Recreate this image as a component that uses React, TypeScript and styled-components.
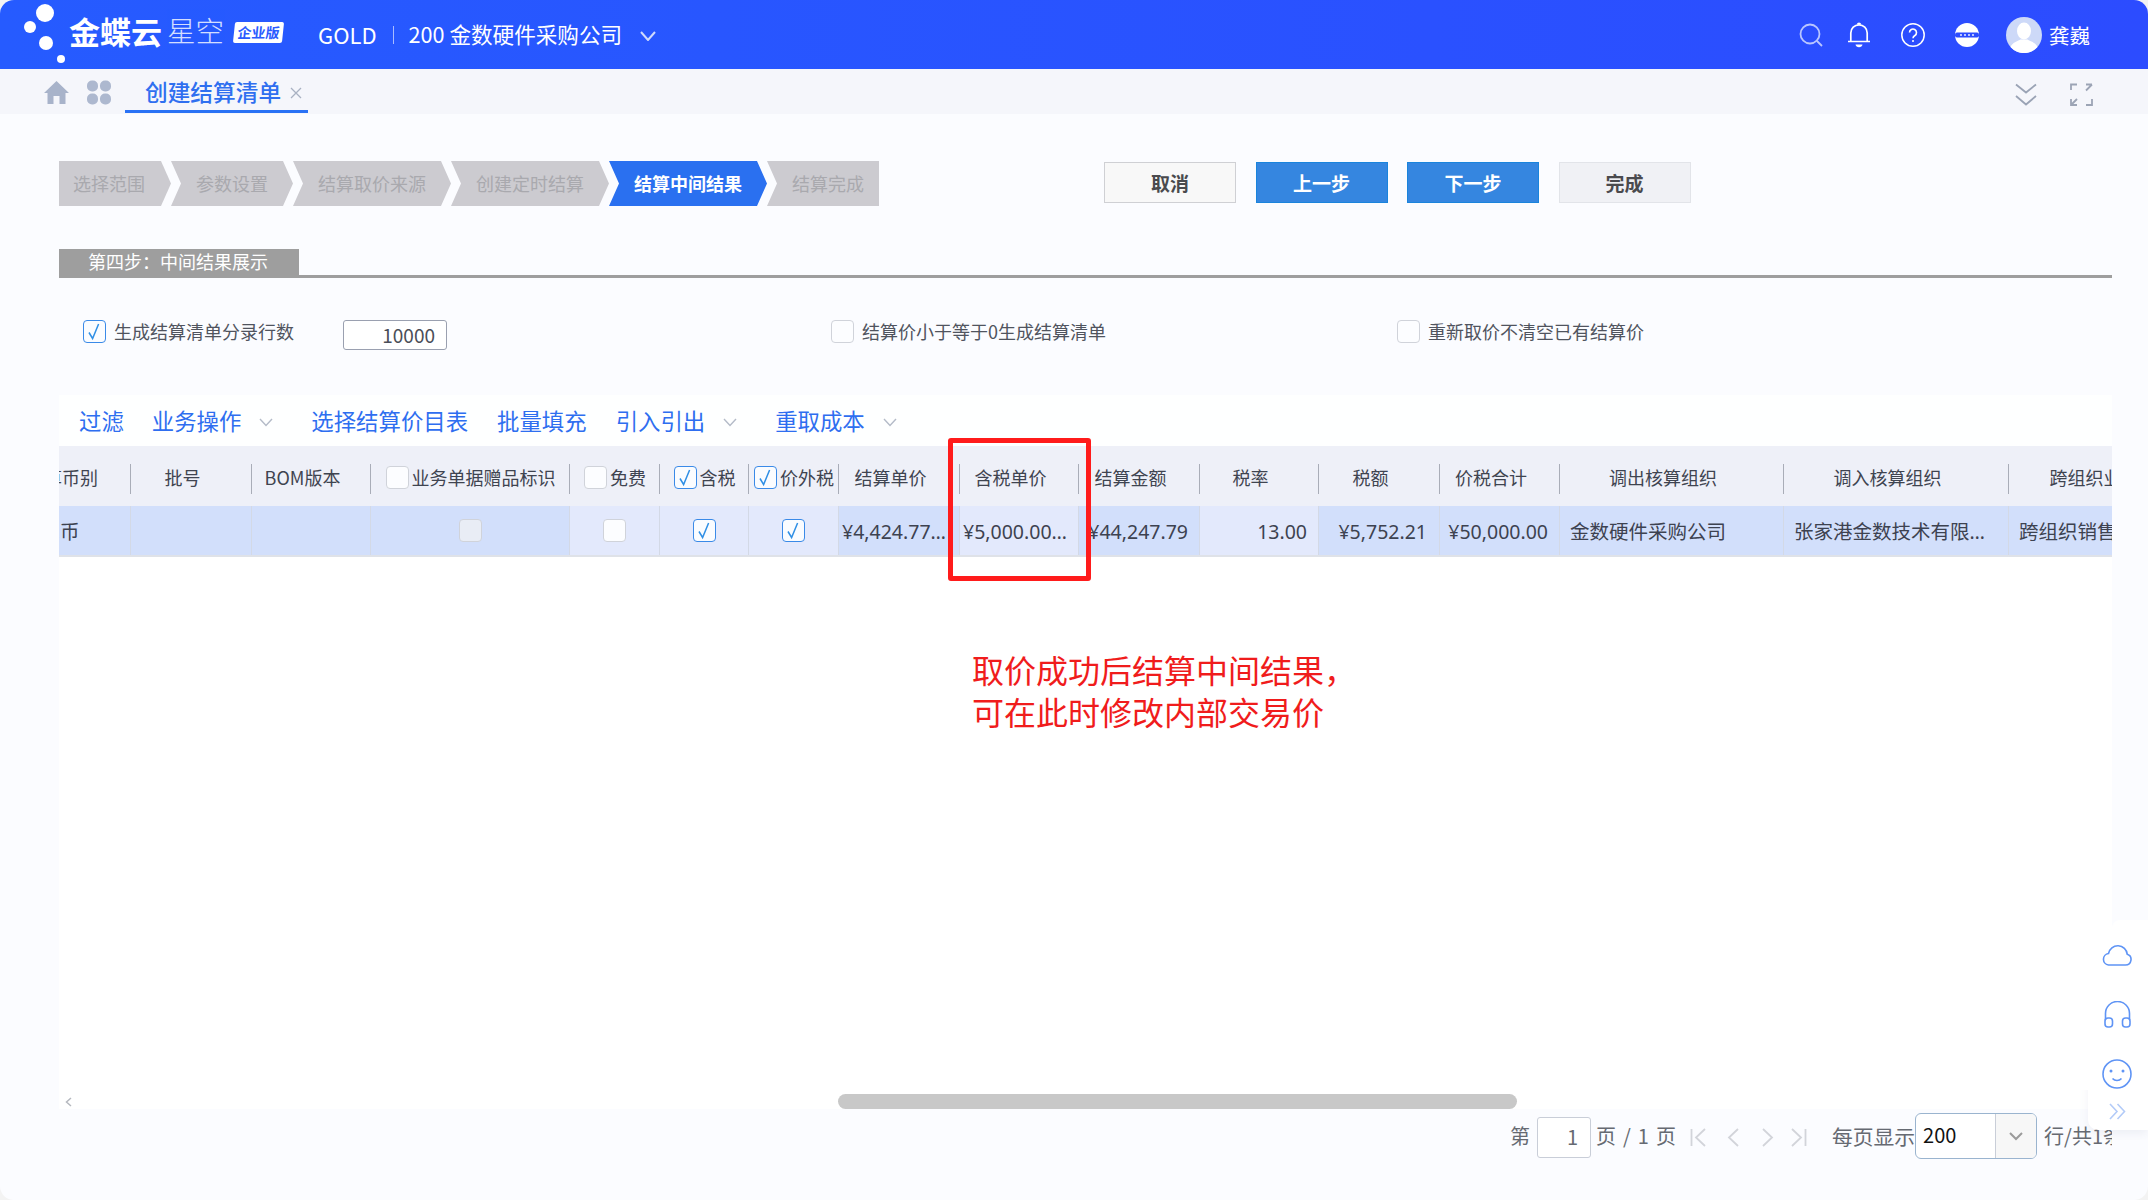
import React from "react";
import styled, { createGlobalStyle } from "styled-components";

const Global = createGlobalStyle`
  html, body { margin: 0; padding: 0; background: #f3f3f3; }
  body { font-family: "Noto Sans CJK SC", "Noto Sans", sans-serif; }
  * { box-sizing: border-box; }
`;

const Win = styled.div`
  position: relative;
  width: 2148px;
  height: 1200px;
  border-radius: 14px;
  overflow: hidden;
  background: #fbfcff;
  display: flex;
  flex-direction: column;
`;

const TopBar = styled.header`
  height: 69px;
  flex: none;
  display: flex;
  align-items: center;
  color: #fff;
  background: linear-gradient(90deg, #265bff, #2c4cff);
`;
const LogoMark = styled.svg`
  width: 49px;
  height: 69px;
  margin-left: 20px;
  flex: none;
`;
const LogoMain = styled.span`
  font-size: 31px;
  font-weight: 700;
  line-height: 1;
  margin-top: -9px;
  white-space: nowrap;
`;
const LogoSub = styled.span`
  font-size: 28.5px;
  font-weight: 300;
  line-height: 1;
  margin: -9px 0 0 5px;
  opacity: 0.8;
  white-space: nowrap;
`;
const Badge = styled.span`
  width: 49px;
  height: 21px;
  margin: -5px 0 0 10px;
  background: #fff;
  color: #2a5cff;
  font-size: 14px;
  font-weight: 700;
  line-height: 21px;
  text-align: center;
  white-space: nowrap;
  transform: skewX(-6deg);
  border-radius: 2px;
`;
const OrgCode = styled.span`
  margin: -2px 0 0 35px;
  font-size: 22px;
`;
const OrgDivider = styled.span`
  width: 1px;
  height: 18px;
  margin: 0 15px 0 16px;
  background: rgba(255, 255, 255, 0.6);
`;
const OrgName = styled.span`
  margin-top: -2px;
  font-size: 21.6px;
  white-space: nowrap;
`;
const OrgChevron = styled.svg`
  width: 16px;
  height: 10px;
  margin: 3px 0 0 18px;
`;
const HeaderRight = styled.div`
  margin-left: auto;
  margin-right: 58px;
  display: flex;
  align-items: center;
`;
const Tool = styled.svg<{ $ml: number }>`
  width: 24px;
  height: 26px;
  margin-left: ${(p) => p.$ml}px;
  flex: none;
`;
const Avatar = styled.svg`
  width: 36px;
  height: 36px;
  margin-left: 27px;
  flex: none;
`;
const UserName = styled.span`
  margin-left: 7px;
  font-size: 20.5px;
`;

const TabBar = styled.nav`
  height: 45px;
  flex: none;
  background: #f5f6fb;
  display: flex;
  align-items: flex-start;
  padding-left: 44px;
`;
const NavIcon = styled.svg<{ $w: number; $ml: number }>`
  width: ${(p) => p.$w}px;
  height: 25px;
  margin: 11px 0 0 ${(p) => p.$ml}px;
  flex: none;
`;
const Tab = styled.div`
  height: 44px;
  margin-left: 14px;
  padding: 4px 6px 0 20px;
  display: flex;
  align-items: center;
  gap: 9px;
  border-bottom: 3px solid #2a72f5;
  color: #2f6ff0;
  font-size: 22.7px;
  font-weight: 500;
  white-space: nowrap;
`;
const TabClose = styled.svg`
  width: 12px;
  height: 12px;
  margin-top: 3px;
`;
const TabBarRight = styled.div`
  margin-left: auto;
  margin-right: 55px;
  display: flex;
  gap: 33px;
  padding-top: 14px;
`;

const Content = styled.main`
  flex: 1;
  min-height: 0;
  display: flex;
  flex-direction: column;
  padding: 47px 36px 0 59px;
`;

const StepRow = styled.div`
  display: flex;
  height: 45px;
  margin-bottom: 43px;
  flex: none;
`;
const Step = styled.div<{ $w: number; $active?: boolean; $first?: boolean; $last?: boolean }>`
  width: ${(p) => p.$w}px;
  height: 45px;
  flex: none;
  padding-left: ${(p) => (p.$first ? 14 : 25)}px;
  background: ${(p) => (p.$active ? "#2a70f0" : "#cccbd0")};
  color: ${(p) => (p.$active ? "#fff" : "#a9a9ae")};
  font-size: 18px;
  font-weight: ${(p) => (p.$active ? 700 : 400)};
  line-height: 44px;
  white-space: nowrap;
  clip-path: polygon(
    0 0,
    ${(p) => (p.$last ? "100%" : "calc(100% - 10px)")} 0,
    100% 50%,
    ${(p) => (p.$last ? "100%" : "calc(100% - 10px)")} 100%,
    0 100%,
    ${(p) => (p.$first ? "0" : "10px")} 50%
  );
`;
const Buttons = styled.div`
  display: flex;
  gap: 19.5px;
  margin: 1px 0 0 225px;
`;
const Btn = styled.div<{ $kind: "plain" | "primary" | "muted" }>`
  width: 132px;
  height: 41px;
  text-align: center;
  line-height: 39px;
  font-size: 19px;
  font-weight: 700;
  border: 1px solid
    ${(p) => (p.$kind === "primary" ? "#1a84dc" : p.$kind === "plain" ? "#cfd0d4" : "#e2e4e9")};
  background: ${(p) => (p.$kind === "primary" ? "#3586e0" : p.$kind === "plain" ? "#f8f8f8" : "#f0f1f5")};
  color: ${(p) => (p.$kind === "primary" ? "#fff" : "#4a4a4e")};
`;

const Section = styled.div`
  height: 29px;
  flex: none;
  border-bottom: 3px solid #9e9e9e;
`;
const SectionTitle = styled.div`
  width: 240px;
  height: 29px;
  padding-left: 29px;
  background: #9e9e9e;
  color: #fff;
  font-size: 18px;
  line-height: 24px;
`;

const Options = styled.div`
  display: grid;
  grid-template-columns: 748px 566px 1fr;
  margin-top: 42px;
  padding-left: 24px;
  height: 30px;
  flex: none;
`;
const Option = styled.div`
  display: flex;
  align-items: flex-start;
`;
const Label = styled.span`
  margin-left: 8px;
  font-size: 18px;
  line-height: 23px;
  color: #50545e;
  white-space: nowrap;
`;
const NumberBox = styled.div`
  width: 104px;
  height: 30px;
  margin-left: 49px;
  padding-right: 11px;
  border: 1px solid #9aa0b0;
  border-radius: 3px;
  background: #fff;
  color: #4a4e58;
  font-size: 19px;
  line-height: 28px;
  text-align: right;
`;

const Box = styled.span<{ $on?: boolean; $disabled?: boolean }>`
  width: 23px;
  height: 23px;
  flex: none;
  display: inline-block;
  border-radius: 4px;
  border: 1px solid ${(p) => (p.$on ? "#3a8ae8" : "#d0d3da")};
  background: ${(p) => (p.$disabled ? "#e9edf5" : p.$on ? "#fafcff" : "#fcfdff")};
`;
const Tick = styled.svg`
  display: block;
  width: 21px;
  height: 21px;
`;

const Toolbar = styled.div`
  margin-top: 45px;
  height: 51px;
  flex: none;
  display: flex;
  align-items: center;
  gap: 29px;
  padding: 0 0 2px 20px;
  background: #feffff;
  color: #2e6ef0;
  font-size: 22.4px;
  white-space: nowrap;
`;
const ToolItem = styled.span`
  display: flex;
  align-items: center;
  &:first-child {
    margin-right: -1px;
  }
`;
const ToolChevron = styled.svg`
  width: 14px;
  height: 9px;
  margin: 6px 9px 0 18px;
`;

const TableWrap = styled.div`
  position: relative;
  flex: none;
`;
const TableClip = styled.div`
  overflow: hidden;
`;
const HeadRow = styled.div`
  display: flex;
  width: max-content;
  margin-left: -48px;
  height: 60px;
  background: #eef0f8;
`;
const BodyRow = styled.div`
  display: flex;
  width: max-content;
  margin-left: -48px;
  height: 51px;
`;
const HeadStrip = styled.div`
  background: #eef0f8;
`;
const BodyStrip = styled.div`
  border-bottom: 2px solid #dfe2e8;
  background: #fff;
  height: 51px;
`;
const HeadCell = styled.div<{ $w: number; $check?: boolean }>`
  position: relative;
  width: ${(p) => p.$w}px;
  flex: none;
  display: flex;
  align-items: center;
  justify-content: center;
  gap: 3px;
  padding: 2px ${(p) => (p.$check ? 0 : 18)}px 0 0;
  color: #3f4450;
  font-size: 18px;
  white-space: nowrap;
  overflow: hidden;
  &::after {
    content: "";
    position: absolute;
    right: 0;
    top: 18px;
    width: 1px;
    height: 30px;
    background: #a9adb8;
  }
`;
const Cell = styled.div<{ $w: number; $dark: boolean; $align?: string; $pad?: string }>`
  width: ${(p) => p.$w}px;
  height: 49px;
  flex: none;
  padding: ${(p) => p.$pad || "0 12px 0 10px"};
  background: ${(p) => (p.$dark ? "#d2dffb" : "#e3e9fc")};
  border-right: 1px solid #d3d9e6;
  color: #3d4250;
  font-family: "Noto Sans", "Noto Sans CJK SC", sans-serif;
  font-size: 19.5px;
  line-height: 51px;
  text-align: ${(p) => p.$align || "left"};
  white-space: nowrap;
  overflow: hidden;
  text-overflow: ellipsis;
`;
const CheckCell = styled(Cell)`
  display: flex;
  align-items: center;
  justify-content: center;
  padding: 0;
`;
const RedBox = styled.div`
  position: absolute;
  left: 889px;
  top: -8px;
  width: 143px;
  height: 143px;
  border: 5.5px solid #ff1b1b;
  border-radius: 3px;
  z-index: 2;
`;

const Sheet = styled.section`
  flex: 1;
  min-height: 0;
  display: flex;
  flex-direction: column;
  background: #fff;
`;
const Note = styled.div`
  flex: 1;
  padding: 91px 0 0 913px;
  color: #f01c1c;
  font-size: 32px;
  line-height: 42px;
  white-space: nowrap;
`;
const ScrollTrack = styled.div`
  height: 15px;
  flex: none;
  display: flex;
  align-items: center;
  padding-left: 6px;
`;
const ScrollLeft = styled.svg`
  width: 7px;
  height: 10px;
  flex: none;
`;
const ScrollThumb = styled.div`
  width: 679px;
  height: 15px;
  margin-left: 766px;
  border-radius: 8px;
  background: #c8c8c8;
`;

const Footer = styled.footer`
  height: 91px;
  flex: none;
  overflow: hidden;
  display: flex;
  align-items: flex-start;
  padding: 4px 0 0 1451px;
  color: #666a72;
  font-size: 20px;
  white-space: nowrap;
`;
const FootText = styled.span<{ $ml?: number; $ws?: number; $fs?: number }>`
  line-height: 46px;
  margin-left: ${(p) => p.$ml || 0}px;
  word-spacing: ${(p) => p.$ws || 0}px;
  font-size: ${(p) => p.$fs || 20}px;
  flex: none;
`;
const PageInput = styled.div`
  width: 54px;
  height: 41px;
  margin: 4px 0 0 7px;
  padding-right: 12px;
  border: 1px solid #c9ced8;
  border-radius: 3px;
  background: #fff;
  text-align: right;
  line-height: 38px;
  flex: none;
`;
const PagerIcon = styled.svg<{ $ml: number }>`
  width: 17px;
  height: 19px;
  margin: 15px 0 0 ${(p) => p.$ml}px;
  flex: none;
`;
const Select = styled.div`
  width: 122px;
  height: 46px;
  flex: none;
  display: flex;
  border: 1px solid #9ab4cf;
  border-radius: 6px;
  overflow: hidden;
  background: #fff;
`;
const SelectValue = styled.span`
  flex: 1;
  padding-left: 7px;
  color: #111;
  line-height: 42px;
`;
const SelectArrow = styled.span`
  width: 41px;
  display: flex;
  align-items: center;
  justify-content: center;
  background: #f7f7f7;
  border-left: 1px solid #c9ced8;
`;

const SideDock = styled.aside`
  position: absolute;
  right: 0;
  top: 920px;
  width: 60px;
  height: 210px;
  background: #fff;
  border-radius: 10px 0 0 10px;
  clip-path: inset(170px 0 -10px -10px);
  box-shadow: 0 4px 10px rgba(120, 130, 160, 0.1);
  z-index: 3;
`;
const DockBack = styled.div`
  position: absolute;
  right: 0;
  top: 920px;
  width: 36px;
  height: 200px;
  background: #fff;
  border-radius: 8px 0 0 0;
  z-index: 3;
`;
const DockIcons = styled.div`
  position: absolute;
  right: 0;
  top: 920px;
  width: 60px;
  display: flex;
  flex-direction: column;
  align-items: center;
  padding: 24px 2px 0 0;
  z-index: 4;
`;
const DockIcon = styled.svg<{ $w: number; $h: number; $mt: number }>`
  width: ${(p) => p.$w}px;
  height: ${(p) => p.$h}px;
  margin-top: ${(p) => p.$mt}px;
  flex: none;
`;

type Col = {
  h: string;
  w: number;
  dark: boolean;
  headCheck?: "on" | "off";
  v?: string;
  align?: string;
  pad?: string;
  check?: "on" | "off" | "disabled";
};

const cols: Col[] = [
  { h: "结算币别", w: 120, dark: true, v: "人民币" },
  { h: "批号", w: 121, dark: true },
  { h: "BOM版本", w: 119, dark: true },
  { h: "业务单据赠品标识", w: 199, dark: true, headCheck: "off", check: "disabled" },
  { h: "免费", w: 90, dark: false, headCheck: "off", check: "off" },
  { h: "含税", w: 89, dark: false, headCheck: "on", check: "on" },
  { h: "价外税", w: 90, dark: false, headCheck: "on", check: "on" },
  { h: "结算单价", w: 121, dark: true, v: "¥4,424.778761", pad: "0 10px 0 3px" },
  { h: "含税单价", w: 119, dark: false, v: "¥5,000.000000", pad: "0 9px 0 3px" },
  { h: "结算金额", w: 121, dark: true, v: "¥44,247.79", align: "right", pad: "0 11px 0 3px" },
  { h: "税率", w: 119, dark: false, v: "13.00", align: "right", pad: "0 11px 0 3px" },
  { h: "税额", w: 121, dark: true, v: "¥5,752.21", align: "right", pad: "0 12px 0 3px" },
  { h: "价税合计", w: 120, dark: true, v: "¥50,000.00", align: "right", pad: "0 11px 0 3px" },
  { h: "调出核算组织", w: 224, dark: true, v: "金数硬件采购公司" },
  { h: "调入核算组织", w: 225, dark: true, v: "张家港金数技术有限公司" },
  { h: "跨组织业务类型", w: 225, dark: true, v: "跨组织销售业务" },
];

const steps = [
  { t: "选择范围", w: 112 },
  { t: "参数设置", w: 122 },
  { t: "结算取价来源", w: 158 },
  { t: "创建定时结算", w: 158 },
  { t: "结算中间结果", w: 158 },
  { t: "结算完成", w: 112 },
];

const Check = ({ on, disabled }: { on?: boolean; disabled?: boolean }) => (
  <Box $on={on} $disabled={disabled}>
    {on && (
      <Tick viewBox="0 0 21 21" fill="none" stroke="#2f8fe5" strokeWidth="1.5">
        <path d="M5 11.5l3.6 6L14.6 3" />
      </Tick>
    )}
  </Box>
);

const Chevron = () => (
  <ToolChevron viewBox="0 0 14 9" fill="none" stroke="#b4bbc8" strokeWidth="1.4">
    <path d="M1 1l6 6.5L13 1" />
  </ToolChevron>
);

export default function App() {
  return (
    <Win>
      <Global />
      <TopBar>
        <LogoMark viewBox="20 0 49 69" fill="#fff">
          <circle cx="45" cy="13" r="9" />
          <circle cx="30" cy="27" r="6" />
          <circle cx="46" cy="43" r="7" />
          <circle cx="61" cy="59" r="4" />
        </LogoMark>
        <LogoMain>金蝶云</LogoMain>
        <LogoSub>星空</LogoSub>
        <Badge>企业版</Badge>
        <OrgCode>GOLD</OrgCode>
        <OrgDivider />
        <OrgName>200 金数硬件采购公司</OrgName>
        <OrgChevron viewBox="0 0 16 10" fill="none" stroke="#cfdafc" strokeWidth="2">
          <path d="M1 1l7 8 7-8" />
        </OrgChevron>
        <HeaderRight>
          <Tool $ml={0} viewBox="0 0 24 26" fill="none" stroke="#b9c6ff" strokeWidth="1.8">
            <circle cx="11" cy="12" r="9.5" />
            <path d="M18 19l5 5" />
          </Tool>
          <Tool $ml={24} viewBox="0 0 24 26" fill="none" stroke="#fff" strokeWidth="1.7">
            <path d="M1 19.5h22M3.8 19.5V11a8.2 8.2 0 0 1 16.4 0v8.5" />
            <path d="M10.5 2.5a1.6 1.6 0 0 1 3 0" />
            <path d="M8.5 22.5h7a3.6 3.6 0 0 1-7 0Z" fill="#fff" stroke="none" />
          </Tool>
          <Tool $ml={30} viewBox="0 0 24 26" fill="none" stroke="#fff" strokeWidth="1.5">
            <circle cx="12" cy="13" r="11.2" />
            <path d="M8.5 10.5a3.5 3.5 0 1 1 5.4 3c-1.3.8-1.9 1.4-1.9 2.8" strokeWidth="1.6" />
            <circle cx="12" cy="19" r="1" fill="#fff" stroke="none" />
          </Tool>
          <Tool $ml={30} viewBox="0 0 24 26">
            <circle cx="12" cy="13" r="12" fill="#fff" />
            <rect x="0" y="10.5" width="24" height="5" rx="2" fill="#2c4cff" />
            <circle cx="6" cy="13" r="0.9" fill="#fff" />
            <circle cx="10" cy="13" r="0.9" fill="#fff" />
            <circle cx="14" cy="13" r="0.9" fill="#fff" />
            <circle cx="18" cy="13" r="0.9" fill="#fff" />
          </Tool>
          <Avatar viewBox="0 0 36 36">
            <circle cx="18" cy="18" r="18" fill="#cdd9f8" />
            <ellipse cx="18" cy="14" rx="7" ry="8.5" fill="#fff" />
            <path d="M4.5 30c2-5 8-6 10-7.5h7c2 1.500 8 2.500 10 7.500A18 18 0 0 1 4.500 30Z" fill="#fff" />
          </Avatar>
          <UserName>龚巍</UserName>
        </HeaderRight>
      </TopBar>

      <TabBar>
        <NavIcon $w={25} $ml={0} viewBox="0 0 25 25" fill="#a8b3ca">
          <path d="M12.500 1L25 13h-3.500v11h-6v-8h-6v8h-6V13H0Z" />
        </NavIcon>
        <NavIcon $w={24} $ml={18} viewBox="0 0 24 25" fill="#adb8cf">
          <rect x="0" y="0.500" width="11" height="11" rx="5" />
          <rect x="13" y="0.500" width="11" height="11" rx="5" />
          <rect x="0" y="13.500" width="11" height="11" rx="5" />
          <rect x="13" y="13.500" width="11" height="11" rx="5" />
        </NavIcon>
        <Tab>
          创建结算清单
          <TabClose viewBox="0 0 12 12" fill="none" stroke="#a9b1c2" strokeWidth="1.3">
            <path d="M1 1l10 10M11 1L1 11" />
          </TabClose>
        </Tab>
        <TabBarRight>
          <svg width="22" height="23" viewBox="0 0 22 23" fill="none" stroke="#9aa3b5" strokeWidth="1.8">
            <path d="M1 1.500l10 8 10-8M1 13l10 8.500L21 13" />
          </svg>
          <svg width="23" height="23" viewBox="0 0 23 23" fill="none" stroke="#9ca4b5" strokeWidth="1.8">
            <path d="M1 7V1.500h6M16 1.500h6M22 1.500l-6 6M1 16v6h6M1 22l6-6M16 22h6v-6" />
          </svg>
        </TabBarRight>
      </TabBar>

      <Content>
        <StepRow>
          {steps.map((s, i) => (
            <Step key={s.t} $w={s.w} $active={i === 4} $first={i === 0} $last={i === 5}>
              {s.t}
            </Step>
          ))}
          <Buttons>
            <Btn $kind="plain">取消</Btn>
            <Btn $kind="primary">上一步</Btn>
            <Btn $kind="primary">下一步</Btn>
            <Btn $kind="muted">完成</Btn>
          </Buttons>
        </StepRow>

        <Section>
          <SectionTitle>第四步：中间结果展示</SectionTitle>
        </Section>

        <Options>
          <Option>
            <Check on />
            <Label>生成结算清单分录行数</Label>
            <NumberBox>10000</NumberBox>
          </Option>
          <Option>
            <Check />
            <Label>结算价小于等于0生成结算清单</Label>
          </Option>
          <Option>
            <Check />
            <Label>重新取价不清空已有结算价</Label>
          </Option>
        </Options>

        <Toolbar>
          <ToolItem>过滤</ToolItem>
          <ToolItem>
            业务操作
            <Chevron />
          </ToolItem>
          <ToolItem>选择结算价目表</ToolItem>
          <ToolItem>批量填充</ToolItem>
          <ToolItem>
            引入引出
            <Chevron />
          </ToolItem>
          <ToolItem>
            重取成本
            <Chevron />
          </ToolItem>
        </Toolbar>

        <TableWrap>
          <TableClip>
            <HeadStrip>
              <HeadRow>
                {cols.map((c) => (
                  <HeadCell key={c.h} $w={c.w} $check={!!c.headCheck}>
                    {c.headCheck && <Check on={c.headCheck === "on"} />}
                    {c.h}
                  </HeadCell>
                ))}
              </HeadRow>
            </HeadStrip>
            <BodyStrip>
              <BodyRow>
                {cols.map((c) =>
                  c.check ? (
                    <CheckCell key={c.h} $w={c.w} $dark={c.dark}>
                      <Check on={c.check === "on"} disabled={c.check === "disabled"} />
                    </CheckCell>
                  ) : (
                    <Cell key={c.h} $w={c.w} $dark={c.dark} $align={c.align} $pad={c.pad}>
                      {c.v}
                    </Cell>
                  )
                )}
              </BodyRow>
            </BodyStrip>
          </TableClip>
          <RedBox />
        </TableWrap>

        <Sheet>
          <Note>
            取价成功后结算中间结果，
            <br />
            可在此时修改内部交易价
          </Note>
          <ScrollTrack>
            <ScrollLeft viewBox="0 0 7 10" fill="none" stroke="#b5b8bf" strokeWidth="1.5">
              <path d="M6 1L1.500 5 6 9" />
            </ScrollLeft>
            <ScrollThumb />
          </ScrollTrack>
        </Sheet>

        <Footer>
          <FootText>第</FootText>
          <PageInput>1</PageInput>
          <FootText $ml={5} $ws={2.5}>页 / 1 页</FootText>
          <PagerIcon $ml={14} viewBox="0 0 17 19" fill="none" stroke="#d2d4da" strokeWidth="1.8">
            <path d="M1.500 1v17M15 1L6 9.500 15 18" />
          </PagerIcon>
          <PagerIcon $ml={18} viewBox="0 0 17 19" fill="none" stroke="#d2d4da" strokeWidth="1.8">
            <path d="M13 1L4 9.500 13 18" />
          </PagerIcon>
          <PagerIcon $ml={17} viewBox="0 0 17 19" fill="none" stroke="#d2d4da" strokeWidth="1.8">
            <path d="M4 1l9 8.500L4 18" />
          </PagerIcon>
          <PagerIcon $ml={14} viewBox="0 0 17 19" fill="none" stroke="#d2d4da" strokeWidth="1.8">
            <path d="M2 1l9 8.500L2 18M15.500 1v17" />
          </PagerIcon>
          <FootText $ml={25} $fs={20.8}>每页显示</FootText>
          <Select>
            <SelectValue>200</SelectValue>
            <SelectArrow>
              <svg width="14" height="9" viewBox="0 0 14 9" fill="none" stroke="#9b9b9b" strokeWidth="2">
                <path d="M1 1l6 6 6-6" />
              </svg>
            </SelectArrow>
          </Select>
          <FootText $ml={7}>行/共1条</FootText>
        </Footer>
      </Content>

      <SideDock />
      <DockBack />
      <DockIcons>
        <DockIcon $w={30} $h={22} $mt={0} viewBox="0 0 30 22" fill="none" stroke="#5f94f5" strokeWidth="1.6">
          <path d="M6.500 21h17a5.500 5.500 0 0 0 1.800-10.700A9.500 9.500 0 0 0 6.500 9.500a5.800 5.800 0 0 0 0 11.500Z" />
        </DockIcon>
        <DockIcon $w={27} $h={27} $mt={35} viewBox="0 0 27 27" fill="none" stroke="#5f94f5" strokeWidth="1.6">
          <path d="M1.500 19v-6.500a12 12 0 0 1 24 0V19" />
          <rect x="1" y="17" width="7.500" height="9" rx="3" />
          <rect x="18.500" y="17" width="7.500" height="9" rx="3" />
        </DockIcon>
        <DockIcon $w={30} $h={30} $mt={31} viewBox="0 0 30 30" fill="none" stroke="#5f94f5" strokeWidth="1.6">
          <circle cx="15" cy="15" r="14" />
          <circle cx="9" cy="12" r="1.500" fill="#5f94f5" stroke="none" />
          <circle cx="21" cy="12" r="1.500" fill="#5f94f5" stroke="none" />
          <path d="M10.500 19.500a6 6 0 0 0 9 0" />
        </DockIcon>
        <DockIcon $w={17} $h={17} $mt={14} viewBox="0 0 17 17" fill="none" stroke="#b3cbf8" strokeWidth="1.6">
          <path d="M1 1l7 7.500L1 16M8.500 1l7 7.500-7 7.500" />
        </DockIcon>
      </DockIcons>
    </Win>
  );
}
